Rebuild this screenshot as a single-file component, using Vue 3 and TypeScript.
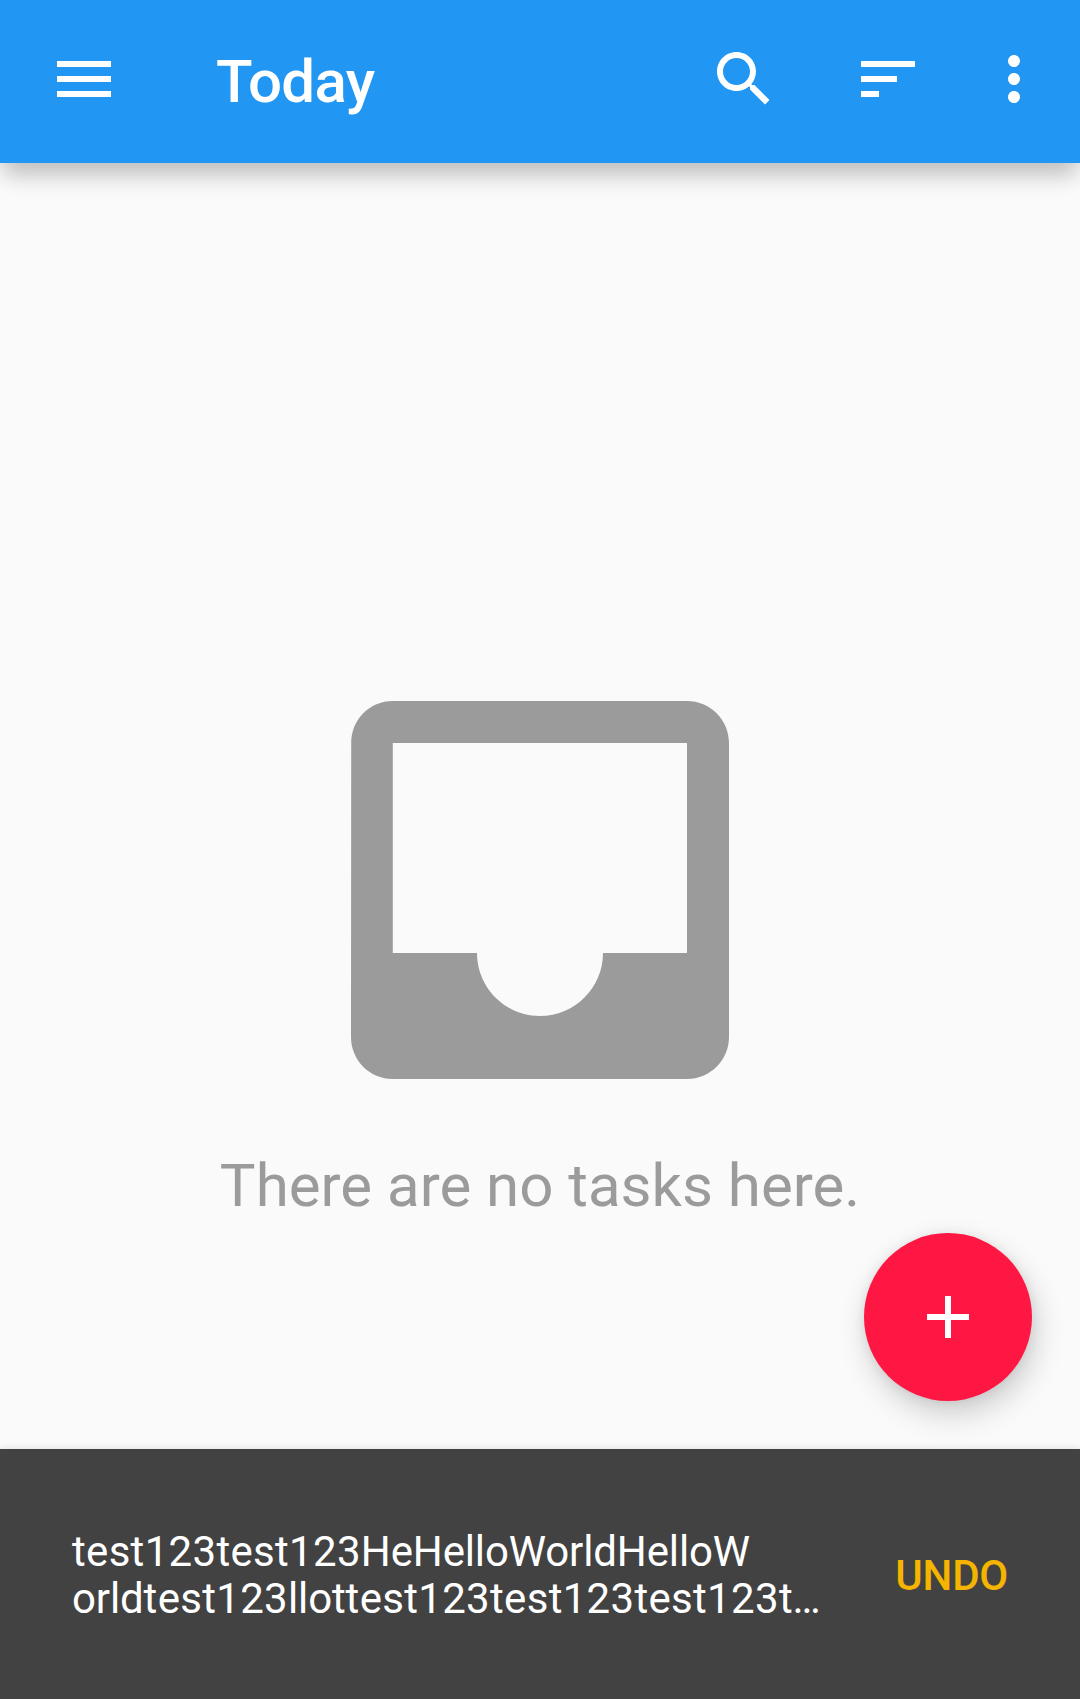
<script setup lang="ts">
interface Action {
  label: string
  path: string
}

const menuPath = 'M3 18h18v-2H3v2zm0-5h18v-2H3v2zm0-7v2h18V6H3z'

const actions: Action[] = [
  {
    label: 'Search',
    path: 'M15.5 14h-.79l-.28-.27C15.41 12.59 16 11.11 16 9.5 16 5.91 13.09 3 9.5 3S3 5.91 3 9.5 5.91 16 9.5 16c1.61 0 3.09-.59 4.23-1.57l.27.28v.79l5 4.99L20.49 19l-4.99-5zm-6 0C7.01 14 5 11.99 5 9.5S7.01 5 9.5 5 14 7.01 14 9.5 11.99 14 9.5 14z',
  },
  { label: 'Sort', path: 'M3 18h6v-2H3v2zM3 6v2h18V6H3zm0 7h12v-2H3v2z' },
  {
    label: 'More options',
    path: 'M12 8c1.1 0 2-.9 2-2s-.9-2-2-2-2 .9-2 2 .9 2 2 2zm0 2c-1.1 0-2 .9-2 2s.9 2 2 2 2-.9 2-2-.9-2-2-2zm0 6c-1.1 0-2 .9-2 2s.9 2 2 2 2-.9 2-2-.9-2-2-2z',
  },
]

// Runs with digits are tracked slightly wider than plain words.
const messageLines: string[][] = [
  'test123test123HeHelloWorldHelloW',
  'orldtest123llottest123test123test123t…',
].map((line) => line.split(/(test123)/).filter((run) => run !== ''))
</script>

<template>
  <div class="screen">
    <header class="toolbar">
      <button class="icon-button" aria-label="Menu">
        <svg class="icon" viewBox="0 0 24 24"><path :d="menuPath" /></svg>
      </button>
      <h1 class="title">Today</h1>
      <nav class="actions">
        <button v-for="a in actions" :key="a.label" class="icon-button" :aria-label="a.label">
          <svg class="icon" viewBox="0 0 24 24"><path :d="a.path" /></svg>
        </button>
      </nav>
    </header>

    <main class="content">
      <svg class="inbox" viewBox="0 0 24 24">
        <path
          d="M19 3H4.99c-1.11 0-1.98.89-1.98 2L3 19c0 1.1.88 2 1.99 2H19c1.1 0 2-.9 2-2V5c0-1.11-.9-2-2-2zm0 12h-4c0 1.66-1.35 3-3 3s-3-1.34-3-3H4.99V5H19v10z"
        />
      </svg>
      <p class="empty-text">There are no tasks here.</p>
      <button class="fab" aria-label="Add task">
        <svg class="icon" viewBox="0 0 24 24"><path d="M19 13h-6v6h-2v-6H5v-2h6V5h2v6h6v2z" /></svg>
      </button>
    </main>

    <footer class="snackbar">
      <p class="message">
        <span v-for="(runs, i) in messageLines" :key="i" class="line"
          ><span v-for="(run, j) in runs" :key="j" :class="{ wide: run === 'test123' }">{{ run }}</span></span
        >
      </p>
      <button class="undo">UNDO</button>
    </footer>
  </div>
</template>

<style>
body {
  margin: 0;
  background: #fafafa;
}
</style>

<style scoped>
.screen {
  display: flex;
  flex-direction: column;
  width: 1080px;
  height: 1699px;
  overflow: hidden;
  background: #fafafa;
  font-family: Roboto, "Liberation Sans", sans-serif;
}
button {
  display: block;
  margin: 0;
  padding: 0;
  border: 0;
  background: none;
  font-family: inherit;
}
.toolbar {
  position: relative;
  z-index: 1;
  box-sizing: border-box;
  display: flex;
  flex: none;
  align-items: flex-start;
  height: 163px;
  padding: 43px 30px 0 48px;
  background: #2196f3;
  box-shadow: 0 16px 20px -4px rgba(0, 0, 0, 0.18), 0 9px 26px rgba(0, 0, 0, 0.08);
}
.icon-button {
  flex: none;
  width: 72px;
  height: 72px;
}
.icon {
  display: block;
  width: 72px;
  height: 72px;
  fill: #fff;
}
.title {
  flex: 1;
  margin: 4px 0 0 96px;
  color: #fff;
  font-size: 60px;
  font-weight: 500;
  line-height: 70px;
  letter-spacing: -0.6px;
}
.actions {
  display: flex;
  gap: 72px;
}
.actions .icon-button:last-child {
  margin-left: -18px;
}
.content {
  position: relative;
  display: flex;
  flex: 1;
  flex-direction: column;
  align-items: center;
  padding-top: 475px;
}
.inbox {
  display: block;
  flex: none;
  width: 504px;
  height: 504px;
  fill: #9b9b9b;
}
.empty-text {
  margin: 9px 0 0;
  color: #9b9b9b;
  font-size: 60px;
  line-height: 70px;
  white-space: nowrap;
}
.fab {
  position: absolute;
  right: 48px;
  bottom: 48px;
  display: flex;
  align-items: center;
  justify-content: center;
  width: 168px;
  height: 168px;
  border-radius: 50%;
  background: #ff1744;
  box-shadow: 4px 13px 30px rgba(0, 0, 0, 0.18), 0 1px 12px rgba(0, 0, 0, 0.08);
}
.snackbar {
  position: relative;
  box-sizing: border-box;
  display: flex;
  flex: none;
  align-items: center;
  justify-content: space-between;
  height: 250px;
  padding: 3px 72px 0;
  background: #424242;
  box-shadow: 0 0 8px rgba(0, 0, 0, 0.12);
}
.message {
  margin: 0 0 2px;
  color: #fff;
  font-size: 42px;
  line-height: 47px;
  white-space: nowrap;
}
.line {
  display: block;
  letter-spacing: -0.13px;
}
.line .wide {
  letter-spacing: 0.31px;
}
.undo {
  color: #f4b400;
  font-size: 42px;
  font-weight: 500;
  line-height: 50px;
  letter-spacing: -0.25px;
}
</style>
